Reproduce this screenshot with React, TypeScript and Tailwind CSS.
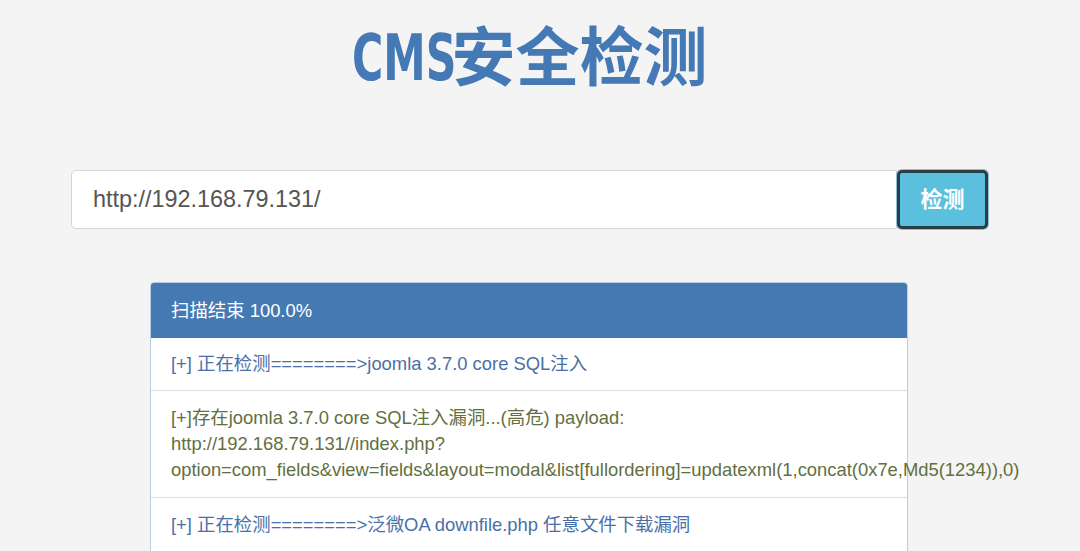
import React from "react";

const font = "font-['Liberation_Sans','Noto_Sans_CJK_SC',sans-serif]";

const Item = (props: { color: string; children: React.ReactNode }) => {
  return (
    <div
      className={`px-5 text-[18.4px] leading-[26px] whitespace-nowrap border-t border-[#dddddd] ${props.color}`}
    >
      {props.children}
    </div>
  );
};

const App = () => {
  return (
    <div className={`min-h-[551px] bg-[#f4f4f4] overflow-hidden ${font}`}>
      <div className="ml-[71px] w-[917px]">
        <h1 className="pt-[26px] text-center text-[64px] leading-none font-bold text-[#4479b5] font-['Liberation_Sans_Narrow','DejaVu_Sans_Condensed','Noto_Sans_CJK_SC',sans-serif] whitespace-nowrap">
          <span className="inline-block w-[100px] text-left align-baseline">
            <span className="inline-block scale-x-[0.74] origin-left">CMS</span>
          </span>
          安全检测
        </h1>

        <div className="mt-[80px] flex h-[59px]">
          <div className="flex-1 flex items-center bg-white border border-[#d6d6d6] rounded-l-[5px] pl-[21px] text-[23.4px] text-[#555555]">
            http://192.168.79.131/
          </div>
          <button className="w-[91px] bg-[#5bc0de] border-[3px] border-[#2d3d48] rounded-[5px] ring-1 ring-[#8fbfd6] text-white text-[22px] font-bold">
            检测
          </button>
        </div>

        <div className="mt-[53px] ml-[79px] w-[758px] border border-[#b9cde3] rounded-t-[4px] bg-white">
          <div className="h-[55px] flex items-center px-5 bg-[#4479b1] text-white text-[18.4px] rounded-t-[3px]">
            扫描结束 100.0%
          </div>
          <div className="px-5 h-[52px] flex items-center text-[18.4px] text-[#4a6fa8] whitespace-nowrap">
            [+] 正在检测========&gt;joomla 3.7.0 core SQL注入
          </div>
          <Item color="text-[#62703f] py-[14px]">
            [+]存在joomla 3.7.0 core SQL注入漏洞...(高危) payload:
            <br />
            http://192.168.79.131//index.php?
            <br />
            option=com_fields&amp;view=fields&amp;layout=modal&amp;list[fullordering]=updatexml(1,concat(0x7e,Md5(1234)),0)
          </Item>
          <Item color="text-[#4a6fa8] py-[14px]">
            [+] 正在检测========&gt;泛微OA downfile.php 任意文件下载漏洞
          </Item>
        </div>
      </div>
    </div>
  );
};

export default App;
